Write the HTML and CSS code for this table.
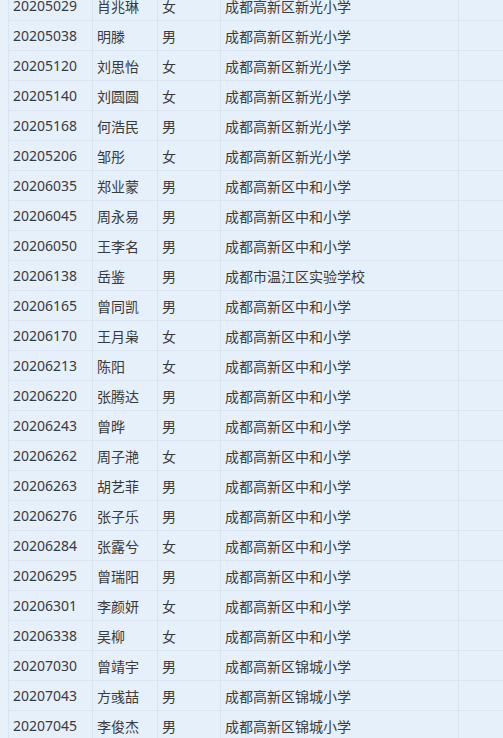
FILE: index.html
```html
<!DOCTYPE html>
<html lang="zh-CN">
<head>
<meta charset="utf-8">
<link rel="stylesheet" href="styles.css">
</head>
<body>
<div class="table">
  <div class="row"><div class="c c1">20205029</div><div class="c c2">肖兆琳</div><div class="c c3">女</div><div class="c c4">成都高新区新光小学</div><div class="c c5"></div></div>
  <div class="row"><div class="c c1">20205038</div><div class="c c2">明滕</div><div class="c c3">男</div><div class="c c4">成都高新区新光小学</div><div class="c c5"></div></div>
  <div class="row"><div class="c c1">20205120</div><div class="c c2">刘思怡</div><div class="c c3">女</div><div class="c c4">成都高新区新光小学</div><div class="c c5"></div></div>
  <div class="row"><div class="c c1">20205140</div><div class="c c2">刘圆圆</div><div class="c c3">女</div><div class="c c4">成都高新区新光小学</div><div class="c c5"></div></div>
  <div class="row"><div class="c c1">20205168</div><div class="c c2">何浩民</div><div class="c c3">男</div><div class="c c4">成都高新区新光小学</div><div class="c c5"></div></div>
  <div class="row"><div class="c c1">20205206</div><div class="c c2">邹彤</div><div class="c c3">女</div><div class="c c4">成都高新区新光小学</div><div class="c c5"></div></div>
  <div class="row"><div class="c c1">20206035</div><div class="c c2">郑业蒙</div><div class="c c3">男</div><div class="c c4">成都高新区中和小学</div><div class="c c5"></div></div>
  <div class="row"><div class="c c1">20206045</div><div class="c c2">周永易</div><div class="c c3">男</div><div class="c c4">成都高新区中和小学</div><div class="c c5"></div></div>
  <div class="row"><div class="c c1">20206050</div><div class="c c2">王李名</div><div class="c c3">男</div><div class="c c4">成都高新区中和小学</div><div class="c c5"></div></div>
  <div class="row"><div class="c c1">20206138</div><div class="c c2">岳鉴</div><div class="c c3">男</div><div class="c c4">成都市温江区实验学校</div><div class="c c5"></div></div>
  <div class="row"><div class="c c1">20206165</div><div class="c c2">曾同凯</div><div class="c c3">男</div><div class="c c4">成都高新区中和小学</div><div class="c c5"></div></div>
  <div class="row"><div class="c c1">20206170</div><div class="c c2">王月枭</div><div class="c c3">女</div><div class="c c4">成都高新区中和小学</div><div class="c c5"></div></div>
  <div class="row"><div class="c c1">20206213</div><div class="c c2">陈阳</div><div class="c c3">女</div><div class="c c4">成都高新区中和小学</div><div class="c c5"></div></div>
  <div class="row"><div class="c c1">20206220</div><div class="c c2">张腾达</div><div class="c c3">男</div><div class="c c4">成都高新区中和小学</div><div class="c c5"></div></div>
  <div class="row"><div class="c c1">20206243</div><div class="c c2">曾晔</div><div class="c c3">男</div><div class="c c4">成都高新区中和小学</div><div class="c c5"></div></div>
  <div class="row"><div class="c c1">20206262</div><div class="c c2">周子滟</div><div class="c c3">女</div><div class="c c4">成都高新区中和小学</div><div class="c c5"></div></div>
  <div class="row"><div class="c c1">20206263</div><div class="c c2">胡艺菲</div><div class="c c3">男</div><div class="c c4">成都高新区中和小学</div><div class="c c5"></div></div>
  <div class="row"><div class="c c1">20206276</div><div class="c c2">张子乐</div><div class="c c3">男</div><div class="c c4">成都高新区中和小学</div><div class="c c5"></div></div>
  <div class="row"><div class="c c1">20206284</div><div class="c c2">张露兮</div><div class="c c3">女</div><div class="c c4">成都高新区中和小学</div><div class="c c5"></div></div>
  <div class="row"><div class="c c1">20206295</div><div class="c c2">曾瑞阳</div><div class="c c3">男</div><div class="c c4">成都高新区中和小学</div><div class="c c5"></div></div>
  <div class="row"><div class="c c1">20206301</div><div class="c c2">李颜妍</div><div class="c c3">女</div><div class="c c4">成都高新区中和小学</div><div class="c c5"></div></div>
  <div class="row"><div class="c c1">20206338</div><div class="c c2">吴柳</div><div class="c c3">女</div><div class="c c4">成都高新区中和小学</div><div class="c c5"></div></div>
  <div class="row"><div class="c c1">20207030</div><div class="c c2">曾靖宇</div><div class="c c3">男</div><div class="c c4">成都高新区锦城小学</div><div class="c c5"></div></div>
  <div class="row"><div class="c c1">20207043</div><div class="c c2">方彧喆</div><div class="c c3">男</div><div class="c c4">成都高新区锦城小学</div><div class="c c5"></div></div>
  <div class="row"><div class="c c1">20207045</div><div class="c c2">李俊杰</div><div class="c c3">男</div><div class="c c4">成都高新区锦城小学</div><div class="c c5"></div></div>
</div>
</body>
</html>
```
FILE: styles.css
```css
html, body {
  margin: 0;
  padding: 0;
  background: #e8f1fa;
  overflow: hidden;
}
body {
  font-family: "Noto Sans", "Noto Sans CJK SC", sans-serif;
  font-size: 14px;
  color: #3a3a3a;
}
.table {
  margin: -9px 0 0 8px;
  border-left: 1px solid #dae5f1;
  background: #e6f0fa;
}
.row {
  display: grid;
  grid-template-columns: 84px 65px 63px 238px 1fr;
  height: 30px;
  box-sizing: border-box;
  border-bottom: 1px solid #dae5f1;
}
.c {
  box-sizing: border-box;
  border-right: 1px solid #dae5f1;
  padding-left: 4px;
  display: flex;
  align-items: center;
  white-space: nowrap;
  overflow: hidden;
}
.c5 {
  border-right: none;
}
```
